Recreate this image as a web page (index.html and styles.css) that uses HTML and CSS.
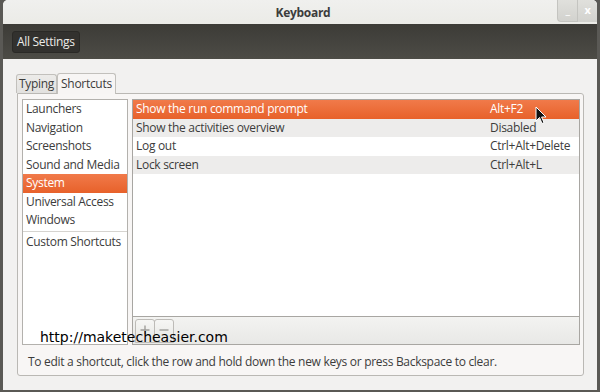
FILE: index.html
```html
<!DOCTYPE html>
<html lang="en">
<head>
    <meta charset="UTF-8">
    <title>Keyboard</title>
    <link rel="stylesheet" href="styles.css">
</head>
<body>
    <div class="window">
        <div class="titlebar">
            <span class="title">Keyboard</span>
            <div class="controls">
                <div class="ctl ctl-min">_</div>
                <div class="ctl ctl-close">x</div>
            </div>
        </div>
        <div class="toolbar">
            <div class="settings-button">All Settings</div>
        </div>
        <div class="content">
            <div class="tabs">
                <div class="tab">Typing</div>
                <div class="tab active">Shortcuts</div>
            </div>
            <div class="notebook">
                <div class="panes">
                    <div class="categories">
                        <div class="cat">Launchers</div>
                        <div class="cat">Navigation</div>
                        <div class="cat">Screenshots</div>
                        <div class="cat">Sound and Media</div>
                        <div class="cat selected">System</div>
                        <div class="cat">Universal Access</div>
                        <div class="cat">Windows</div>
                        <div class="cat custom">Custom Shortcuts</div>
                    </div>
                    <div class="shortcuts">
                        <div class="rows">
                            <div class="row selected"><span>Show the run command prompt</span><span class="key">Alt+F2</span></div>
                            <div class="row alt"><span>Show the activities overview</span><span class="key">Disabled</span></div>
                            <div class="row"><span>Log out</span><span class="key">Ctrl+Alt+Delete</span></div>
                            <div class="row alt"><span>Lock screen</span><span class="key">Ctrl+Alt+L</span></div>
                        </div>
                        <div class="list-tools">
                            <div class="tool-btn">
                                <svg width="10" height="10" viewBox="0 0 10 10"><path d="M5 0.5 V9.5 M0.5 5 H9.5" stroke="#a09f9b" stroke-width="1.4"/></svg>
                            </div>
                            <div class="tool-btn">
                                <svg width="10" height="10" viewBox="0 0 10 10"><path d="M0.5 5 H9.5" stroke="#a09f9b" stroke-width="1.4"/></svg>
                            </div>
                        </div>
                    </div>
                </div>
                <p class="hint">To edit a shortcut, click the row and hold down the new keys or press Backspace to clear.</p>
            </div>
        </div>
    </div>
    <div class="watermark">http://maketecheasier.com</div>
    <svg class="cursor" width="12" height="19" viewBox="0 0 12 19">
        <path d="M1 1 L1 15 L4.5 11.5 L7 17.5 L9 16.6 L6.6 11 L11 11 Z" fill="#111" stroke="#fff" stroke-width="1"/>
    </svg>
</body>
</html>
```

FILE: styles.css
```css
body {
    margin: 0;
    padding: 0;
    width: 600px;
    height: 392px;
    overflow: hidden;
    background-color: #5a5955;
    font-family: "Open Sans", "Noto Sans", sans-serif;
    font-size: 12px;
    letter-spacing: -0.3px;
    color: #3c3c3c;
    position: relative;
}
.window {
    margin-left: 3px;
    width: 594px;
    height: 390px;
    background-color: #f2f1f0;
    border-radius: 5px 5px 0 0;
    overflow: hidden;
    display: flex;
    flex-direction: column;
}
.titlebar {
    height: 24px;
    flex-shrink: 0;
    background: linear-gradient(#f0f0ee, #ebebe7);
    display: flex;
    align-items: center;
    justify-content: center;
    position: relative;
}
.title {
    font-weight: bold;
    color: #3c3c3c;
    margin-left: 6px;
}
.controls {
    position: absolute;
    top: 0;
    right: 0;
    display: flex;
}
.ctl {
    width: 19px;
    height: 22px;
    background: linear-gradient(#e0e0dc, #d2d2ce);
    color: #fff;
    font-weight: bold;
    font-size: 11px;
    text-align: center;
    line-height: 20px;
    border-left: 1px solid #c4c4c0;
}
.ctl-min {
    border-radius: 0 0 0 4px;
    border-bottom: 1px solid #c4c4c0;
    height: 21px;
}
.toolbar {
    height: 35px;
    flex-shrink: 0;
    background: linear-gradient(#3c3b37, #4d4c46);
    display: flex;
    align-items: center;
    padding-left: 9px;
}
.settings-button {
    height: 20px;
    line-height: 20px;
    padding: 0 4px;
    background-color: #32312e;
    border: 1px solid #2a2926;
    border-radius: 3px;
    color: #ecebe8;
    margin-top: 1px;
}
.content {
    flex: 1;
    padding: 14px 13px 14px 14px;
    display: flex;
    flex-direction: column;
}
.tabs {
    display: flex;
    align-items: flex-end;
    height: 20px;
    margin-left: -1px;
}
.tab {
    height: 18px;
    line-height: 18px;
    padding: 0 2px;
    background: linear-gradient(#ecebe9, #e2e1df);
    border: 1px solid #c2c0bc;
    border-bottom: none;
    border-radius: 3px 3px 0 0;
    color: #3c3c3c;
}
.tab.active {
    height: 20px;
    line-height: 20px;
    padding: 0 3px;
    background-color: #f7f5f4;
    background-image: none;
    margin-bottom: -1px;
    position: relative;
    z-index: 1;
}
.notebook {
    flex: 1;
    background-color: #f8f6f5;
    border: 1px solid #bab8b4;
    border-radius: 0 3px 3px 3px;
    padding: 5px 3px 0 4px;
    display: flex;
    flex-direction: column;
}
.panes {
    display: flex;
    gap: 4px;
    height: 246px;
}
.categories {
    width: 104px;
    background-color: #fff;
    border: 1px solid #b3b1ad;
}
.cat {
    height: 18.5px;
    line-height: 18.5px;
    padding-left: 3px;
    white-space: nowrap;
}
.cat.selected {
    background: linear-gradient(#f17a4a, #e7612a);
    color: #fff;
}
.cat.custom {
    border-top: 1px solid #d6d4d0;
    margin-top: 1px;
    padding-top: 1px;
}
.shortcuts {
    flex: 1;
    border: 1px solid #a8a6a2;
    display: flex;
    flex-direction: column;
}
.rows {
    flex: 1;
    background-color: #fff;
}
.row {
    height: 18.5px;
    line-height: 18.5px;
    display: flex;
    padding-left: 3px;
}
.row span:first-child {
    flex: 1;
}
.key {
    width: 89px;
}
.row.alt {
    background-color: #edeceb;
}
.row.selected {
    background: linear-gradient(#f17a4a, #e7612a);
    color: #fff;
}
.list-tools {
    height: 25px;
    border-top: 1px solid #a8a6a2;
    background: linear-gradient(#f3f3f1, #e8e8e6);
    display: flex;
    padding: 2px 0 0 2px;
}
.tool-btn {
    width: 20px;
    height: 24px;
    border: 1px solid #bdbbb7;
    border-radius: 3px 3px 0 0;
    background: linear-gradient(#f6f6f4, #e6e6e3);
    display: flex;
    justify-content: center;
    padding-top: 5px;
    box-sizing: border-box;
    margin-right: -1px;
}
.hint {
    margin: 0;
    padding: 8px 0 0 6px;
    color: #3c3c3c;
    white-space: nowrap;
}
.watermark {
    position: absolute;
    left: 40px;
    top: 329px;
    font-family: "DejaVu Sans", sans-serif;
    font-size: 14px;
    letter-spacing: 0;
    color: #000;
}
.cursor {
    position: absolute;
    left: 535px;
    top: 106px;
}
```
